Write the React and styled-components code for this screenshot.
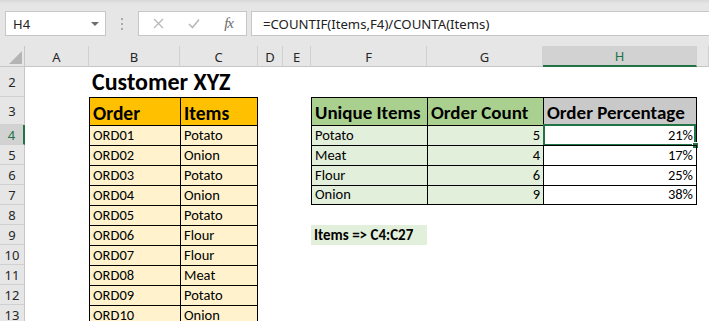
import React from "react";
import styled, { createGlobalStyle } from "styled-components";

const GlobalStyle = createGlobalStyle`
  html, body {
    margin: 0;
    padding: 0;
    background: #ffffff;
  }
`;

const cellFont = `"Carlito", "Lato", "Liberation Sans", sans-serif`;
const uiFont = `"Noto Sans", "Open Sans", sans-serif`;

const Window = styled.div`
  width: 709px;
  height: 321px;
  overflow: hidden;
  display: flex;
  flex-direction: column;
  background: #ffffff;
`;

const FormulaBar = styled.div`
  height: 46px;
  flex: none;
  display: flex;
  align-items: flex-start;
  padding: 11px 0 0 5px;
  box-sizing: border-box;
  background: linear-gradient(#d8d8d8 0, #e6e6e6 4px, #e6e6e6 100%);
`;

const NameBox = styled.div`
  width: 101px;
  height: 25px;
  box-sizing: border-box;
  background: #fff;
  border: 1px solid #c6c6c6;
  display: flex;
  align-items: center;
  justify-content: space-between;
  padding: 0 6px 0 7px;
  font: 13px ${uiFont};
  color: #222;
`;

const Caret = styled.span`
  width: 0;
  height: 0;
  border-left: 4px solid transparent;
  border-right: 4px solid transparent;
  border-top: 4px solid #6d6d6d;
`;

const Grip = styled.div`
  width: 32px;
  height: 25px;
  display: flex;
  flex-direction: column;
  align-items: center;
  justify-content: center;
  gap: 3px;

  span {
    width: 2px;
    height: 2px;
    background: #a8a8a8;
  }
`;

const IconBox = styled.div`
  width: 109px;
  height: 25px;
  box-sizing: border-box;
  background: #fff;
  border: 1px solid #c6c6c6;
  display: flex;
  align-items: center;
  justify-content: space-between;
  padding: 0 13px 0 14px;
`;

const Fx = styled.span`
  font: italic 15px "Liberation Serif", serif;
  color: #6a6a6a;
  letter-spacing: -1px;
`;

const FormulaInput = styled.div`
  flex: 1;
  height: 25px;
  margin-left: 4px;
  box-sizing: border-box;
  background: #fff;
  border: 1px solid #c6c6c6;
  border-right: none;
  display: flex;
  align-items: center;
  padding-left: 11px;
  font: 13.2px ${uiFont};
  color: #222;
  white-space: nowrap;
`;

const Sheet = styled.div`
  display: grid;
  grid-template-columns: 25px 64px 91px 78px 25px 28px 116px 116px 154px 1fr;
  grid-template-rows: 21px 30px 28px repeat(10, 20px);
  background: #fff;
`;

const Corner = styled.div`
  background: #e6e6e6;
  border-right: 1px solid #c6c6c6;
  border-bottom: 1px solid #c6c6c6;
  position: relative;

  &::after {
    content: "";
    position: absolute;
    right: 2px;
    bottom: 2px;
    border-left: 13px solid transparent;
    border-bottom: 13px solid #b4b4b4;
  }
`;

const ColHead = styled.div`
  background: ${(p) => (p.$active ? "#d2d2d2" : "#e6e6e6")};
  color: ${(p) => (p.$active ? "#217346" : "#262626")};
  border-right: 1px solid #d0d0d0;
  border-bottom: ${(p) => (p.$active ? "2px solid #217346" : "1px solid #c6c6c6")};
  display: flex;
  align-items: center;
  justify-content: center;
  font: 13px ${uiFont};
  padding-top: 1px;
`;

const RowHead = styled.div`
  background: ${(p) => (p.$active ? "#d2d2d2" : "#e6e6e6")};
  color: ${(p) => (p.$active ? "#217346" : "#262626")};
  border-right: ${(p) => (p.$active ? "2px solid #217346" : "1px solid #c6c6c6")};
  border-bottom: 1px solid #d0d0d0;
  display: flex;
  align-items: center;
  justify-content: center;
  font: 13px ${uiFont};
`;

const Cell = styled.div`
  position: relative;
  min-width: 0;
  box-sizing: border-box;
  background: ${(p) => p.$bg || "transparent"};
  border-left: ${(p) => (p.$bl ? "1px solid #000" : "none")};
  border-top: ${(p) => (p.$bt ? "1px solid #000" : "none")};
  border-right: ${(p) => (p.$br ? "1px solid #000" : "none")};
  border-bottom: ${(p) => (p.$bb ? "1px solid #000" : "none")};
  display: flex;
  align-items: flex-end;
  justify-content: ${(p) => (p.$right ? "flex-end" : "flex-start")};
  padding: 0 3px 1px 3px;
  font-family: ${cellFont};
  font-size: ${(p) => p.$size || 14.5}px;
  font-weight: ${(p) => (p.$bold ? 700 : 400)};
  line-height: 1.15;
  color: #000;
  white-space: nowrap;
  overflow: visible;
  z-index: ${(p) => (p.$over ? 1 : 0)};

  ${(p) =>
    p.$selected &&
    `
    &::after {
      content: "";
      position: absolute;
      left: -1px;
      top: -2px;
      right: 0;
      bottom: -1px;
      border: 2px solid #217346;
    }
    &::before {
      content: "";
      position: absolute;
      right: -3px;
      bottom: -4px;
      width: 5px;
      height: 5px;
      background: #217346;
      border: 1px solid #fff;
      z-index: 2;
    }
  `}
`;

const orders = ["Potato", "Onion", "Potato", "Onion", "Potato", "Flour", "Flour", "Meat", "Potato", "Onion"];
const summary = [
  ["Potato", 5, "21%"],
  ["Meat", 4, "17%"],
  ["Flour", 6, "25%"],
  ["Onion", 9, "38%"],
];
const columns = ["A", "B", "C", "D", "E", "F", "G", "H"];

const ORANGE = "#ffc000";
const CREAM = "#fff2cc";
const GREEN = "#a9d08e";
const MINT = "#e2efda";
const GREY = "#c9c9c9";

function buildRow(r) {
  // props for columns A..H (index 0..7)
  const cells = Array.from({ length: 8 }, () => ({}));
  if (r === 2) {
    cells[1] = { text: "Customer XYZ", $bold: true, $size: 24, $over: true };
  }
  if (r === 3) {
    cells[1] = { text: "Order", $bg: ORANGE, $bold: true, $size: 19.5, $bl: true, $bt: true };
    cells[2] = { text: "Items", $bg: ORANGE, $bold: true, $size: 19.5, $bl: true, $bt: true, $br: true };
    cells[5] = { text: "Unique Items", $bg: GREEN, $bold: true, $size: 19, $bl: true, $bt: true };
    cells[6] = { text: "Order Count", $bg: GREEN, $bold: true, $size: 19, $bl: true, $bt: true };
    cells[7] = { text: "Order Percentage", $bg: GREY, $bold: true, $size: 19, $bl: true, $bt: true, $br: true };
  }
  if (r >= 4 && r <= 13) {
    const i = r - 4;
    cells[1] = { text: `ORD${String(i + 1).padStart(2, "0")}`, $bg: CREAM, $bl: true, $bt: true };
    cells[2] = { text: orders[i], $bg: CREAM, $bl: true, $bt: true, $br: true };
  }
  if (r >= 4 && r <= 7) {
    const [item, count, pct] = summary[r - 4];
    const last = r === 7;
    cells[5] = { text: item, $bg: MINT, $bl: true, $bt: true, $bb: last };
    cells[6] = { text: count, $bg: MINT, $bl: true, $bt: true, $bb: last, $right: true };
    cells[7] = { text: pct, $bl: true, $bt: true, $br: true, $bb: last, $right: true, $selected: r === 4 };
  }
  if (r === 9) {
    cells[5] = { text: "Items => C4:C27", $bg: MINT, $bold: true, $size: 15 };
  }
  return cells;
}

export default function App() {
  const rows = [2, 3, 4, 5, 6, 7, 8, 9, 10, 11, 12, 13];
  return (
    <Window>
      <GlobalStyle />
      <FormulaBar>
        <NameBox>
          H4
          <Caret />
        </NameBox>
        <Grip>
          <span />
          <span />
          <span />
        </Grip>
        <IconBox>
          <svg width="11" height="11" viewBox="0 0 11 11">
            <path d="M1 1L10 10M10 1L1 10" stroke="#b9b9b9" strokeWidth="1.3" fill="none" />
          </svg>
          <svg width="12" height="11" viewBox="0 0 12 11">
            <path d="M1 6L4.5 9.5L11 1.5" stroke="#b9b9b9" strokeWidth="1.6" fill="none" />
          </svg>
          <Fx>fx</Fx>
        </IconBox>
        <FormulaInput>=COUNTIF(Items,F4)/COUNTA(Items)</FormulaInput>
      </FormulaBar>
      <Sheet>
        <Corner />
        {columns.map((c) => (
          <ColHead key={c} $active={c === "H"}>
            {c}
          </ColHead>
        ))}
        <ColHead />
        {rows.map((r) => (
          <React.Fragment key={r}>
            <RowHead $active={r === 4}>{r}</RowHead>
            {buildRow(r).map(({ text, ...props }, i) => (
              <Cell key={i} {...props}>
                {text}
              </Cell>
            ))}
            <Cell />
          </React.Fragment>
        ))}
      </Sheet>
    </Window>
  );
}
